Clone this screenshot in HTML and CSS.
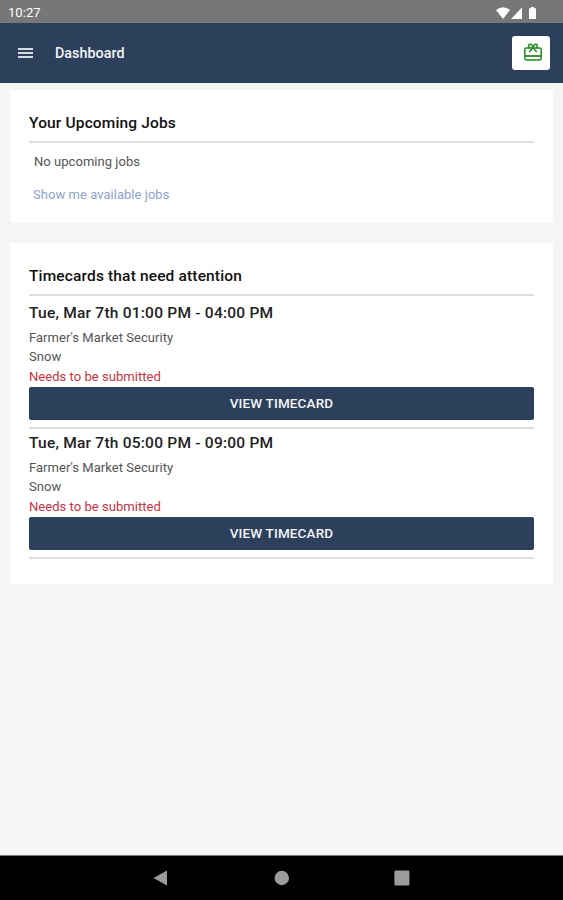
FILE: index.html
```html
<!DOCTYPE html>
<html lang="en">
<head>
<meta charset="UTF-8" />
<meta name="viewport" content="width=device-width, initial-scale=1" />
<title>Dashboard</title>
<link rel="stylesheet" href="styles.css">
</head>
<body>
<div class="status-bar">
<span class="clock">10:27</span>
<svg class="status-icons" width="42" height="14" viewBox="0 0 42 14" fill="#fff" aria-hidden="true">
<path d="M0 4 Q7 -1.5 14 4 L7 13z" />
<path d="M15 13 L26 1.500 V13z" />
<path d="M33 2.200 h2 V1 h3 v1.200 h2 V13 h-7z" />
</svg>
</div>
<header class="app-bar">
<button class="menu-button" aria-label="Menu"><span></span><span></span><span></span></button>
<h1>Dashboard</h1>
<button class="gift-button" aria-label="Rewards">
<svg width="18" height="18" viewBox="0 0 18 18" fill="none" stroke="#228b22" stroke-width="1.500">
<rect x=".8" y="5" width="16.400" height="12" rx="1.400" />
<path d="M1 13h16" stroke-width="1.800" />
<path d="M9 4.600C8.400 2.300 7 1 5.800 1.300C4.300 1.700 4.400 4.200 6 4.700M9 4.600C9.600 2.300 11 1 12.200 1.300C13.700 1.700 13.600 4.200 12 4.700M9 4.800L5.300 9M9 4.800L12.700 9" />
</svg>
</button>
</header>
<main>
<section class="card jobs">
<h2>Your Upcoming Jobs</h2>
<p class="empty">No upcoming jobs</p>
<a class="jobs-link" href="#">Show me available jobs</a>
</section>
<section class="card timecards">
<h2>Timecards that need attention</h2>
<article class="timecard">
<h3>Tue, Mar 7th 01:00 PM - 04:00 PM</h3>
<p>Farmer's Market Security</p>
<p>Snow</p>
<p class="warning">Needs to be submitted</p>
<button class="view-button">VIEW TIMECARD</button>
</article>
<article class="timecard">
<h3>Tue, Mar 7th 05:00 PM - 09:00 PM</h3>
<p>Farmer's Market Security</p>
<p>Snow</p>
<p class="warning">Needs to be submitted</p>
<button class="view-button">VIEW TIMECARD</button>
</article>
</section>
</main>
<nav class="nav-bar">
<svg width="16" height="16" viewBox="0 0 16 16" fill="#9b9b9b"><path d="M.5 8 L14 .5 V15.500z" /></svg>
<svg width="16" height="16" viewBox="0 0 16 16" fill="#9b9b9b"><circle cx="7.800" cy="8" r="7.200" /></svg>
<svg width="16" height="16" viewBox="0 0 16 16" fill="#9b9b9b"><rect x=".4" y=".6" width="15" height="14.800" rx="1.200" /></svg>
</nav>
</body>
</html>
```
FILE: styles.css
```css
:root {
--navy: #2d405b;
--page-bg: #f5f5f5;
--line: #dedede;
}
* {
box-sizing: border-box;
}
body {
margin: 0;
height: 100vh;
display: flex;
flex-direction: column;
background: var(--page-bg);
color: #555;
font-family: Roboto, "Liberation Sans", sans-serif;
font-size: 13px;
letter-spacing: 0.04px;
}
h1, h2, h3, p {
margin: 0;
}
button {
border: none;
padding: 0;
font-family: inherit;
}
.status-bar {
height: 23px;
padding: 1px 25px 0 8px;
background: #777;
color: #fff;
display: flex;
justify-content: space-between;
align-items: center;
}
.status-icons {
margin-top: 1px;
}
.app-bar {
height: 60px;
padding: 0 13px 0 18px;
background: var(--navy);
display: flex;
align-items: center;
}
.menu-button {
width: 15px;
background: none;
display: grid;
gap: 2px;
}
.menu-button span {
height: 2px;
background: #d5dbe5;
}
.app-bar h1 {
flex: 1;
margin-left: 22px;
color: #f2f4f7;
font-size: 14.3px;
font-weight: 500;
}
.gift-button {
width: 38px;
height: 34px;
padding: 0 0 2px 3px;
border-radius: 3px;
background: #fff;
display: flex;
align-items: center;
justify-content: center;
}
main {
flex: 1;
padding: 7px 10px 0;
}
.card {
padding: 0 19px;
background: #fff;
}
.card h2 {
height: 53px;
padding-top: 14px;
border-bottom: 2px solid var(--line);
color: #111;
font-size: 15.5px;
font-weight: 500;
line-height: 38px;
letter-spacing: 0.15px;
}
.jobs {
height: 133px;
margin-bottom: 20px;
}
.empty {
padding: 10px 0 0 5px;
line-height: 18px;
}
.jobs-link {
display: block;
padding: 15px 0 0 4px;
color: #8fa3cb;
line-height: 18px;
text-decoration: none;
}
.timecards {
height: 341px;
}
.timecard {
height: 130px;
padding-top: 4px;
border-bottom: 2px solid var(--line);
}
.timecards h2 + .timecard {
height: 133px;
padding-top: 7px;
}
.timecard h3 {
color: #222;
font-size: 15.5px;
font-weight: 500;
line-height: 20px;
letter-spacing: 0.23px;
margin-bottom: 5px;
}
.timecard p {
line-height: 19.4px;
}
.timecard .warning {
padding-top: 0.6px;
color: #c8323f;
}
.view-button {
display: block;
width: 100%;
height: 33px;
border-radius: 2px;
background: var(--navy);
color: #f2f4f7;
font-size: 13.5px;
font-weight: 500;
letter-spacing: 0.15px;
}
.nav-bar {
height: 45px;
padding: 0 153px;
border-top: 1px solid #777;
background: #000;
display: flex;
align-items: center;
justify-content: space-between;
}
```
